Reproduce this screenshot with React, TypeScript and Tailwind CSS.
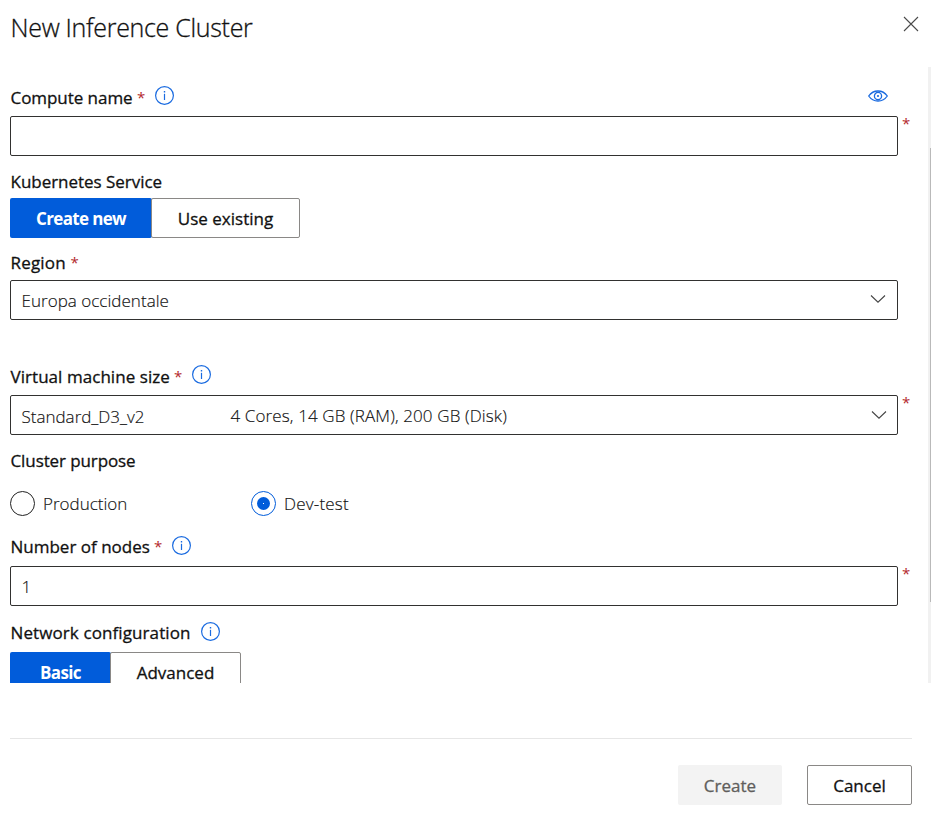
import type { ReactNode } from "react";

function InfoIcon({ className = "" }: { className?: string }) {
  return (
    <svg className={`h-[19px] w-[19px] shrink-0 ${className}`} viewBox="0 0 19 19" fill="none">
      <circle cx="9.5" cy="9.5" r="8.9" stroke="#1a6be0" strokeWidth="1.2" />
      <path d="M9.5 7.8V14" stroke="#1a6be0" strokeWidth="1.2" />
      <path d="M9.5 5v1.5" stroke="#1a6be0" strokeWidth="1.4" />
    </svg>
  );
}

function Chevron({ className = "" }: { className?: string }) {
  return (
    <svg className={`h-2 w-4 shrink-0 ${className}`} viewBox="0 0 16 8" fill="none">
      <path d="M1 0.5L8 7.2L15 0.5" stroke="#444" strokeWidth="1.1" />
    </svg>
  );
}

function Star() {
  return (
    <span className="w-2 shrink-0 text-[15px] font-normal tracking-normal text-[#b3282d] [-webkit-text-stroke:0px]">*</span>
  );
}

function Label({ children, text, className = "" }: { children?: ReactNode; text: string; className?: string }) {
  return (
    <div className="flex h-6 items-start pl-[0.5px] text-[17px] leading-6 font-normal whitespace-nowrap [-webkit-text-stroke:0.3px]">
      <span className={`shrink-0 pt-px ${className}`}>{text}</span>
      {children}
    </div>
  );
}

function Field({ children, required = false }: { children?: ReactNode; required?: boolean }) {
  return (
    <div className="flex h-10">
      <div className="flex h-10 w-[888px] shrink-0 rounded-[2px] border border-[#323130] pl-[10.5px] text-[17px] leading-[40px] font-light whitespace-nowrap text-[#111] [-webkit-text-stroke:0.15px]">
        {children}
      </div>
      {required && <span className="-mt-px pl-[4px] text-[15px] leading-4 text-[#b3282d]">*</span>}
    </div>
  );
}

export default function App() {
  return (
    <div className="flex h-[817px] w-[931px] flex-col overflow-hidden bg-white font-['Open_Sans','Noto_Sans',sans-serif] text-[#111]">
      <header className="flex h-[67px] shrink-0 justify-between pr-[12px] pl-[10.5px]">
        <h1 className="pt-[9px] text-[25px] leading-9 font-light tracking-[-0.3px] whitespace-nowrap [-webkit-text-stroke:0.3px]">
          New Inference Cluster
        </h1>
        <svg className="mt-4 h-4 w-4" viewBox="0 0 16 16" fill="none">
          <path d="M1 1L15 15M15 1L1 15" stroke="#4a4a4a" strokeWidth="1.1" />
        </svg>
      </header>

      <div className="flex h-[616px] shrink-0 justify-between overflow-hidden">
        <main className="w-[910px] shrink-0 pt-[18px] pl-[10px]">
          <div className="flex h-[31px] justify-between pr-[22px]">
            <Label text="Compute name" className="w-[126.5px] tracking-[-0.05px]">
              <Star />
              <InfoIcon className="mt-px ml-[10px]" />
            </Label>
            <svg className="mt-[5px] h-3 w-5" viewBox="0 0 20 12" fill="none" stroke="#1a6be0">
              <path d="M.7 6C3 2.7 6 1 10 1s7 1.7 9.3 5C17 9.3 14 11 10 11S3 9.3.7 6Z" strokeWidth="1.3" />
              <circle cx="10" cy="6" r="3.6" strokeWidth="1.3" />
              <circle cx="10" cy="6" r="1.1" fill="#1a6be0" stroke="none" />
            </svg>
          </div>
          <Field required />

          <div className="h-[42px] pt-[13px]">
            <Label text="Kubernetes Service" className="tracking-[-0.03px]" />
          </div>
          <div className="flex h-10 text-[17px] leading-[42px] whitespace-nowrap">
            <button className="h-10 w-[142px] rounded-[2px] bg-[#015cda] text-center font-bold tracking-[-0.65px] text-white">Create new</button>
            <button className="-ml-px h-10 w-[149px] rounded-[2px] border border-[#8a8886] text-center leading-[40px] font-normal [-webkit-text-stroke:0.3px]">Use existing</button>
          </div>

          <div className="h-[42px] pt-[12px]">
            <Label text="Region" className="w-[60px] tracking-[0.2px]">
              <Star />
            </Label>
          </div>
          <Field>
            <span className="tracking-[0.03px]">Europa occidentale</span>
            <Chevron className="mt-[14px] mr-[11px] ml-auto" />
          </Field>

          <div className="h-[75px] pt-[44px]">
            <Label text="Virtual machine size" className="w-[163.5px] tracking-[0.05px]">
              <Star />
              <InfoIcon className="mt-px ml-[10px]" />
            </Label>
          </div>
          <Field required>
            <span className="w-[209px] pt-px">Standard_D3_v2</span>
            <span className="tracking-[0.12px]">4 Cores, 14 GB (RAM), 200 GB (Disk)</span>
            <Chevron className="mt-[15px] mr-[10px] ml-auto" />
          </Field>

          <div className="h-[56px] pt-[13px]">
            <Label text="Cluster purpose" className="tracking-[-0.1px]" />
          </div>
          <div className="flex h-[25px] text-[17px] leading-[25px] font-light text-[#111] [-webkit-text-stroke:0.15px]">
            <label className="flex w-[241px]">
              <span className="mr-[8px] h-[25px] w-[25px] rounded-full border border-[#222]" />
              <span>Production</span>
            </label>
            <label className="flex">
              <span className="mr-[8px] flex h-[25px] w-[25px] items-center justify-center rounded-full border border-[#015cda]">
                <span className="flex h-[13px] w-[13px] items-center justify-center rounded-full bg-[#015cda]">
                  <span className="h-px w-px bg-white" />
                </span>
              </span>
              <span className="tracking-[0.2px]">Dev-test</span>
            </label>
          </div>

          <div className="h-[50px] pt-[18px]">
            <Label text="Number of nodes" className="w-[143.5px]">
              <Star />
              <InfoIcon className="mt-[2px] ml-[10px]" />
            </Label>
          </div>
          <Field required>
            <span>1</span>
          </Field>

          <div className="h-[46px] pt-[14px]">
            <Label text="Network configuration" className="w-[190.5px] tracking-[0.1px]">
              <InfoIcon className="mt-[2px]" />
            </Label>
          </div>
          <div className="flex h-10 text-[17px] leading-[42px] whitespace-nowrap">
            <button className="h-10 w-[101px] rounded-[2px] bg-[#015cda] text-center font-bold tracking-[-0.65px] text-white">Basic</button>
            <button className="-ml-px h-10 w-[131px] rounded-[2px] border border-[#8a8886] text-center leading-[40px] font-normal [-webkit-text-stroke:0.3px]">Advanced</button>
          </div>
        </main>
        <div className="flex w-[3px] justify-end bg-[#f1f1f1]">
          <div className="mt-[81px] h-[454px] w-px bg-[#b9b9b9]" />
        </div>
      </div>

      <footer className="mt-[55px] mr-[19px] ml-[10px] flex justify-end gap-[25px] border-t border-[#e6e6e6] pt-[26px] text-[17px] leading-[42px] font-normal [-webkit-text-stroke:0.3px]">
        <button className="h-10 w-[104px] rounded-[2px] bg-[#f3f3f3] text-[#605e5c]">Create</button>
        <button className="h-10 w-[105px] rounded-[2px] border border-[#8a8886] leading-[40px]">Cancel</button>
      </footer>
    </div>
  );
}
